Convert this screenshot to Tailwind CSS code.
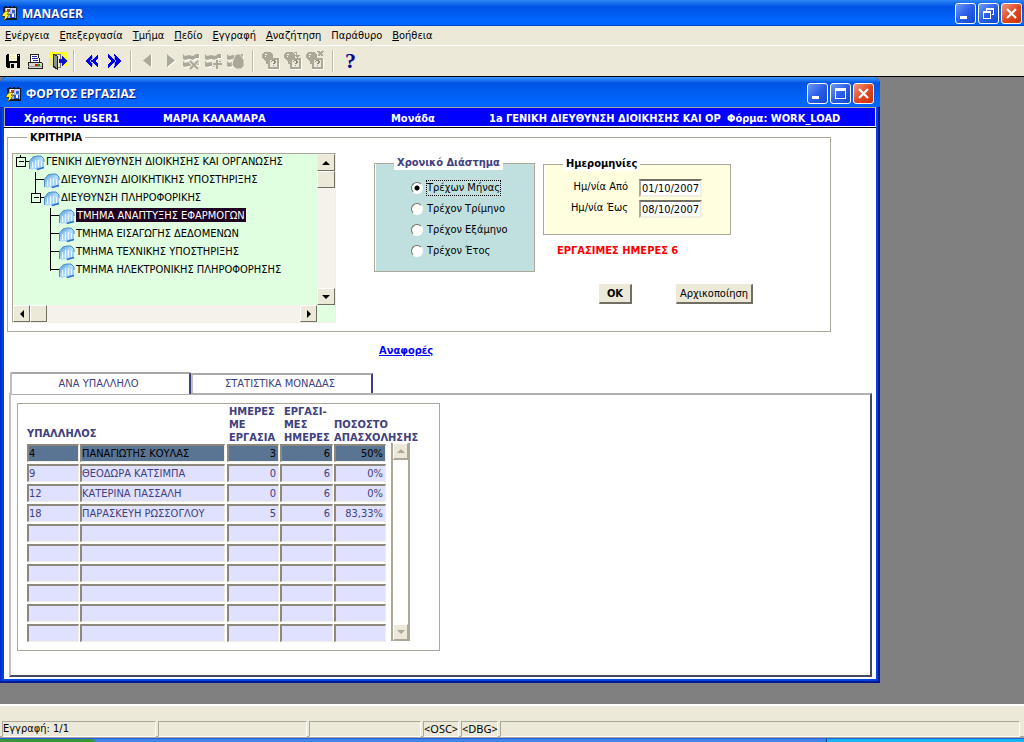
<!DOCTYPE html>
<html lang="el">
<head>
<meta charset="utf-8">
<title>MANAGER</title>
<script src="https://cdn.jsdelivr.net/npm/@tailwindcss/browser@4"></script>
</head>
<body class="flex min-h-screen flex-col bg-[#808080] font-['DejaVu_Sans_Condensed','DejaVu_Sans',sans-serif] text-[11px] leading-[14px] text-black">

<svg class="absolute size-0" aria-hidden="true">
  <defs>
    <linearGradient id="cube" x1="0" y1="0" x2="1" y2="1"><stop offset="0" stop-color="#4a9be0"/><stop offset=".5" stop-color="#b4dcff"/><stop offset="1" stop-color="#8cc4f8"/></linearGradient>
    <symbol id="book" viewBox="0 0 16 16">
      <path d="M1 14V6l3-4 4-1h5l2 3v9l-7 2-3-1-2 1z" fill="url(#cube)"/>
      <path d="M.5 14V6L4 2l4-1h4l3 3v3" fill="none" stroke="#4c8cc0"/>
      <path d="M3.500 13V7M6.500 13V5M9.500 12V5M12.500 12V6" stroke="#eaf7ff"/>
      <path d="M8 14.500l7-2" stroke="#2a70c8" stroke-width="1.500"/>
    </symbol>
    <symbol id="app" viewBox="0 0 16 16">
      <path d="M1 2h2V1h2v1h2V1h2v1h2V1h2v1h2v13H3v-3H1z" fill="#101820"/>
      <path d="M3 3h11v10H5V9H3z" fill="#9fb4e8"/>
      <path d="M4 3h4v5H4z" fill="#fff"/><path d="M5 4h3v3H5z" fill="#c83040"/>
      <path d="M9 3h5v5H9z" fill="#c4d4fc"/><path d="M10 5h3v3h-3z" fill="#4060c8"/>
      <path d="M8 9h5v4H8z" fill="#2850d8"/><path d="M10 9h2v3h-2z" fill="#fff"/>
      <path d="M3 6h4L5 9h3l-6 7 1-5H0z" fill="#ffee20" stroke="#504800" stroke-width=".6"/>
    </symbol>
    <symbol id="sheets" viewBox="0 0 18 18">
      <path d="M1 2l2 2 4-1 4 1 3-2h3v4h-3l-3 2-4-1-4 1-2-1zM1 9l2 2 4-1 4 1 3-2h3v4h-3l-3 2-4-1-4 1-2-1z"/>
    </symbol>
    <symbol id="query" viewBox="0 0 20 20">
      <path d="M1 3l2-2h6l3 2v4l-2 1-1 5H5v-2L1 7z" fill="#aca899"/>
      <path d="M4 3h2M4 5h1" stroke="#fff"/>
      <path d="M7 7h11v11H7z" fill="#aca899"/><path d="M9 9h7v7H9z" fill="#ece9d8"/>
      <path d="M10 10h1V9h3v1h1v2h-1v1h-2v-1h1v-2h-2v1h-1zM12 14h1v1h-1z" fill="#8c8878"/>
      <path d="M7 18h11V8h1v11H7z" fill="#fff"/>
    </symbol>
  </defs>
</svg>

<!-- Application title bar -->
<header class="flex h-[26px] items-center bg-linear-to-b from-[#2f86f5] from-0% via-[#0054e3] via-25% to-[#0066ff] to-80% pl-[2px] pr-[2px] shadow-[inset_0_-1px_0_#0048c8]">
  <svg class="size-4" shape-rendering="crispEdges"><use href="#app"/></svg>
  <h1 class="ml-1 flex-1 pt-[2px] font-['Open_Sans','Noto_Sans',sans-serif] text-[12px] font-bold text-white [text-shadow:1px_1px_0_#0a1883]">MANAGER</h1>
  <div class="flex gap-[2px]">
    <button aria-label="Minimize" class="size-[21px] rounded-[3px] border border-white bg-linear-to-br from-[#6f98f5] via-[#2a5ee8] to-[#1148d0]"><svg class="size-full" viewBox="0 0 19 19"><path d="M4 12h7v3H4z" fill="#fff"/></svg></button>
    <button aria-label="Restore" class="size-[21px] rounded-[3px] border border-white bg-linear-to-br from-[#6f98f5] via-[#2a5ee8] to-[#1148d0]"><svg class="size-full" viewBox="0 0 19 19" shape-rendering="crispEdges"><path d="M7 4h8v7h-2v-1h1V6H8v1H7zM4 7h8v8H4zM5 9v5h6V9z" fill="#fff" fill-rule="evenodd"/></svg></button>
    <button aria-label="Close" class="size-[21px] rounded-[3px] border border-white bg-linear-to-br from-[#f0937a] via-[#e04a22] to-[#c83208]"><svg class="size-full" viewBox="0 0 19 19"><path d="M5 5l9 9M14 5l-9 9" stroke="#fff" stroke-width="2.200"/></svg></button>
  </div>
</header>

<!-- Menu -->
<nav class="flex h-5 items-center gap-[10px] border-b border-white bg-[#ece9d8] pl-[5px]">
  <a href="#"><u>Ε</u>νέργεια</a>
  <a href="#"><u>Ε</u>πεξεργασία</a>
  <a href="#"><u>Τ</u>μήμα</a>
  <a href="#"><u>Π</u>εδίο</a>
  <a href="#"><u>Ε</u>γγραφή</a>
  <a href="#"><u>Α</u>ναζήτηση</a>
  <a href="#">Παράθυρο</a>
  <a href="#"><u>Β</u>οήθεια</a>
</nav>

<!-- Toolbar -->
<div role="toolbar" class="flex h-[31px] items-center border-b border-black bg-[#ece9d8] pl-[5px]">
  <button aria-label="Save" class="w-[22px]"><svg width="16" height="16" shape-rendering="crispEdges"><path d="M2 1h12l1 1v13H2l-1-1V2z"/><path d="M4 1h8v7H4z" fill="#fffbd8"/><path d="M5 3h1v1H5zM8 3h1v1H8zM6 5h1v1H6zM9 5h1v1H9z" fill="#e8d860"/><path d="M5 10h7v5H5z" fill="#e8e8e0"/><path d="M6 11h3v4H6z"/><path d="M13 2h1v1h-1z" fill="#fff"/></svg></button>
  <button aria-label="Print" class="w-[22px]"><svg width="16" height="16" shape-rendering="crispEdges"><path d="M3 1h8l2 8H4z" fill="#fff" stroke="#222"/><path d="M5 3h5M5 5h6M6 7h5" stroke="#2a2ab0"/><path d="M1 9h13l1 1v5H1z" fill="#d8d8d0" stroke="#222"/><path d="M8 11h2v2H8z" fill="#f00"/><path d="M10 11h3v2h-3z" fill="#0a0"/><path d="M1 13h14v1H1z" fill="#999"/></svg></button>
  <button aria-label="Exit"><svg width="18" height="18" shape-rendering="crispEdges"><path d="M0 0h18v14H0z" fill="#ffff20"/><path d="M0 6h4v8H0zM8 2h6v12H8z" fill="#e8e890"/><path d="M4 2h7v13H4z" fill="#ece9d8" stroke="#777"/><path d="M4 2l4 2v13l-4-3z" fill="#889090" stroke="#222"/><path d="M10 7h3V4l5 5-5 5v-3h-3z" fill="#1010d0"/></svg></button>
  <span class="ml-[6px] mr-[10px] h-[22px] border-l border-r border-l-[#c0bcac] border-r-white"></span>
  <button aria-label="Previous block" class="w-[23px]"><svg width="14" height="14" shape-rendering="crispEdges"><path d="M7 0v14L0 7zM13 0v4l-3 3 3 3v4L6 7z" fill="#0000e0"/><path d="M7 2v3L5 7l2 2v3" fill="none" stroke="#9ab0ff"/></svg></button>
  <button aria-label="Next block"><svg width="14" height="14" shape-rendering="crispEdges"><path d="M6 0v14l7-7zM0 0v4l3 3-3 3v4l7-7z" fill="#0000e0"/><path d="M6 2v3l2 2-2 2v3" fill="none" stroke="#9ab0ff"/></svg></button>
  <span class="ml-[8px] mr-[11px] h-[22px] border-l border-r border-l-[#c0bcac] border-r-white"></span>
  <button aria-label="Previous record" disabled class="w-[23px]"><svg width="10" height="14"><path d="M9 0v14L2 7z" fill="#fff"/><path d="M8 0v13L0 6.500z" fill="#aca899"/></svg></button>
  <button aria-label="Next record" disabled class="w-[16px]"><svg width="10" height="14"><path d="M2 0v14l8-7z" fill="#fff"/><path d="M1 0v13l8-6.500z" fill="#aca899"/></svg></button>
  <button aria-label="Delete record" disabled class="w-[22px]"><svg width="19" height="19"><use href="#sheets" x="1" y="1" fill="#fff" width="18" height="18"/><use href="#sheets" fill="#aca899" width="18" height="18"/><path d="M8 9l8 8M16 9l-8 8" stroke="#ece9d8" stroke-width="4"/><path d="M8 9l8 8M16 9l-8 8" stroke="#aca899" stroke-width="2"/></svg></button>
  <button aria-label="Insert record" disabled class="w-[22px]"><svg width="19" height="19"><use href="#sheets" x="1" y="1" fill="#fff" width="18" height="18"/><use href="#sheets" fill="#aca899" width="18" height="18"/><path d="M13 7v11M8 12h11" stroke="#ece9d8" stroke-width="4"/><path d="M13 8v9M9 12h9" stroke="#aca899" stroke-width="2"/></svg></button>
  <button aria-label="Lock record" disabled><svg width="19" height="19"><use href="#sheets" x="1" y="1" fill="#fff" width="18" height="18"/><use href="#sheets" fill="#aca899" width="18" height="18"/><path d="M7 8l3-6h4l4 6v6l-3 3h-5l-4-4z" fill="#aca899" stroke="#ece9d8"/></svg></button>
  <span class="ml-[7px] mr-[7px] h-[22px] border-l border-r border-l-[#c0bcac] border-r-white"></span>
  <button aria-label="Enter query" disabled class="w-[22px]"><svg width="20" height="20" shape-rendering="crispEdges"><use href="#query"/></svg></button>
  <button aria-label="Execute query" disabled class="w-[22px]"><svg width="20" height="20" shape-rendering="crispEdges"><use href="#query"/><path d="M11 1h3v3h3l-3 3-3-3h2V2h-2z" fill="#aca899"/></svg></button>
  <button aria-label="Cancel query" disabled class="w-[22px]"><svg width="20" height="20" shape-rendering="crispEdges"><use href="#query"/><path d="M13 0l5 5M18 0l-5 5" stroke="#aca899" stroke-width="1.500"/></svg></button>
  <span class="ml-[5px] mr-[11px] h-[22px] border-l border-r border-l-[#c0bcac] border-r-white"></span>
  <button aria-label="Help" class="font-['Liberation_Serif',serif] text-[22px] font-bold leading-5 text-[#000090]">?</button>
</div>

<main class="flex-1">
  <!-- Workload window -->
  <section class="mr-36 rounded-t-[7px] bg-[#0044e0] px-1 pb-1 shadow-[inset_-2px_-2px_0_#001a98,inset_2px_0_0_#0030d0]">
    <header class="-mx-1 flex h-[30px] items-center rounded-t-[7px] bg-linear-to-b from-[#3f98ff] from-0% via-[#0054e3] via-20% to-[#0066ff] to-85% pl-[6px] pr-[6px] pt-[3px]">
      <svg class="size-4" shape-rendering="crispEdges"><use href="#app"/></svg>
      <h2 class="ml-1 flex-1 font-['Open_Sans','Noto_Sans',sans-serif] text-[12px] font-bold text-white [text-shadow:1px_1px_0_#0a1883]">ΦΟΡΤΟΣ ΕΡΓΑΣΙΑΣ</h2>
      <div class="flex gap-[2px]">
        <button aria-label="Minimize" class="size-[21px] rounded-[3px] border border-white bg-linear-to-br from-[#6f98f5] via-[#2a5ee8] to-[#1148d0]"><svg class="size-full" viewBox="0 0 19 19"><path d="M4 12h7v3H4z" fill="#fff"/></svg></button>
        <button aria-label="Maximize" class="size-[21px] rounded-[3px] border border-white bg-linear-to-br from-[#6f98f5] via-[#2a5ee8] to-[#1148d0]"><svg class="size-full" viewBox="0 0 19 19" shape-rendering="crispEdges"><path d="M4 4h11v11H4zM5 7v7h9V7z" fill="#fff" fill-rule="evenodd"/></svg></button>
        <button aria-label="Close" class="size-[21px] rounded-[3px] border border-white bg-linear-to-br from-[#f0937a] via-[#e04a22] to-[#c83208]"><svg class="size-full" viewBox="0 0 19 19"><path d="M5 5l9 9M14 5l-9 9" stroke="#fff" stroke-width="2.200"/></svg></button>
      </div>
    </header>

    <div class="grid h-5 grid-cols-[59px_80px_228px_98px_238px_1fr] items-center whitespace-nowrap border border-b-white border-l-[#aca899] border-r-[#ece9d8] border-t-[#aca899] bg-[#0000ff] pl-[19px] pt-1 font-bold text-white">
      <span>Χρήστης:</span><span>USER1</span><span>ΜΑΡΙΑ ΚΑΛΑΜΑΡΑ</span>
      <span>Μονάδα</span>
      <span>1a ΓΕΝΙΚΗ ΔΙΕΥΘΥΝΣΗ ΔΙΟΙΚΗΣΗΣ ΚΑΙ ΟΡ</span><span>Φόρμα: WORK_LOAD</span>
    </div>

    <div class="border-t border-black bg-white px-[3px] pb-[2px] pt-[2px]">
      <fieldset class="mr-[42px] border border-[#aca899] pb-2 pl-1">
        <legend class="ml-[15px] h-[14px] px-[3px] font-bold leading-4">ΚΡΙΤΗΡΙΑ</legend>
        <div class="flex items-start pt-[9px]">

          <!-- Organisation tree -->
          <div class="grid w-[324px] grid-cols-[1fr_18px] grid-rows-[151px_17px] border border-[#f1efe2] border-l-[#aca899] border-t-[#aca899] bg-[#e0ffe0]">
            <ul id="tree" class="overflow-hidden whitespace-nowrap"></ul>
            <div class="flex flex-col bg-[#f4f2ea]">
              <button aria-label="Up" class="grid h-[17px] place-items-center border border-b-[#716f64] border-l-[#f1efe2] border-r-[#716f64] border-t-[#f1efe2] bg-[#ece9d8]"><svg width="8" height="4"><path d="M4 0l4 4H0z"/></svg></button>
              <span class="h-[17px] border border-b-[#716f64] border-l-white border-r-[#716f64] border-t-white bg-[#ece9d8]"></span>
              <button aria-label="Down" class="mt-auto grid h-[17px] place-items-center border border-b-[#716f64] border-l-white border-r-[#716f64] border-t-white bg-[#ece9d8]"><svg width="8" height="4"><path d="M4 4l4-4H0z"/></svg></button>
            </div>
            <div class="flex bg-[#f4f2ea]">
              <button aria-label="Left" class="grid w-[17px] place-items-center border border-b-[#716f64] border-l-white border-r-[#716f64] border-t-white bg-[#ece9d8]"><svg width="4" height="8"><path d="M0 4l4-4v8z"/></svg></button>
              <span class="w-[17px] border border-b-[#716f64] border-l-white border-r-[#716f64] border-t-white bg-[#ece9d8]"></span>
              <button aria-label="Right" class="ml-auto grid w-[17px] place-items-center border border-b-[#716f64] border-l-white border-r-[#716f64] border-t-white bg-[#ece9d8]"><svg width="4" height="8"><path d="M4 4L0 0v8z"/></svg></button>
            </div>
          </div>

          <!-- Period -->
          <fieldset class="ml-[38px] mt-[3px] h-[116px] w-[161px] border border-[#aca899] bg-[#c0e0e0] pl-9 shadow-[inset_1px_0_0_#fff]">
            <legend class="-ml-[17px] bg-white px-[3px] font-bold text-[#404080]">Χρονικό Διάστημα</legend>
            <div class="flex flex-col pt-[7px]">
              <label class="flex h-[21px] items-center gap-1"><input type="radio" name="period" checked class="size-3 appearance-none rounded-full border border-b-white border-l-[#716f64] border-r-white border-t-[#716f64] bg-white checked:bg-[radial-gradient(#000_0_2px,#fff_3px)]"><span class="outline-dotted outline-1 outline-black">Τρέχων Μήνας</span></label>
              <label class="flex h-[21px] items-center gap-1"><input type="radio" name="period" class="size-3 appearance-none rounded-full border border-b-white border-l-[#716f64] border-r-white border-t-[#716f64] bg-white checked:bg-[radial-gradient(#000_0_2px,#fff_3px)]"><span>Τρέχον Τρίμηνο</span></label>
              <label class="flex h-[21px] items-center gap-1"><input type="radio" name="period" class="size-3 appearance-none rounded-full border border-b-white border-l-[#716f64] border-r-white border-t-[#716f64] bg-white checked:bg-[radial-gradient(#000_0_2px,#fff_3px)]"><span>Τρέχον Εξάμηνο</span></label>
              <label class="flex h-[21px] items-center gap-1"><input type="radio" name="period" class="size-3 appearance-none rounded-full border border-b-white border-l-[#716f64] border-r-white border-t-[#716f64] bg-white checked:bg-[radial-gradient(#000_0_2px,#fff_3px)]"><span>Τρέχον Έτος</span></label>
            </div>
          </fieldset>

          <!-- Dates -->
          <div class="ml-2 mt-1">
            <fieldset class="h-[78px] w-[188px] border border-[#aca899] bg-[#ffffe0] shadow-[inset_1px_0_0_#fff]">
              <legend class="ml-[19px] bg-white px-[3px] font-bold">Ημερομηνίες</legend>
              <div class="grid grid-cols-[84px_63px] gap-x-[11px] gap-y-[3px] pt-[8px] text-right">
                <label for="from" class="leading-[15px]">Ημ/νία Από</label>
                <input id="from" value="01/10/2007" class="h-[18px] border-2 border-b-[#f1efe2] border-l-[#aca899] border-r-[#f1efe2] border-t-[#716f64] bg-white pl-[1px]">
                <label for="to" class="leading-[15px]">Ημ/νία Έως</label>
                <input id="to" value="08/10/2007" class="h-[18px] border-2 border-b-[#f1efe2] border-l-[#aca899] border-r-[#f1efe2] border-t-[#716f64] bg-white pl-[1px]">
              </div>
            </fieldset>
            <p class="ml-[14px] mt-[9px] font-bold text-[#ff0000]">ΕΡΓΑΣΙΜΕΣ ΗΜΕΡΕΣ 6</p>
            <div class="ml-14 mt-[26px] flex gap-11">
              <button class="h-5 w-[33px] border border-b-2 border-r-2 border-[#716f64] border-l-[#ece9d8] border-t-[#ece9d8] bg-[#ece9d8] font-bold">OK</button>
              <button class="h-5 w-[77px] border border-b-2 border-r-2 border-[#716f64] border-l-[#ece9d8] border-t-[#ece9d8] bg-[#ece9d8]">Αρχικοποίηση</button>
            </div>
          </div>
        </div>
      </fieldset>

      <a href="#" class="ml-[372px] mt-[12px] inline-block font-bold text-[#0000ff] underline">Αναφορές</a>

      <!-- Tabs -->
      <div role="tablist" class="ml-[3px] mt-[14px] flex items-end text-[#404080]">
        <button role="tab" aria-selected="true" class="z-1 -mb-px h-[22px] w-[181px] rounded-t-[2px] border-2 border-b-0 border-l-[#c0c0c0] border-r-[#404080] border-t-[#a8a8a8] bg-white pr-1">ΑΝΑ ΥΠΑΛΛΗΛΟ</button>
        <button role="tab" aria-selected="false" class="h-[20px] w-[182px] border-2 border-b-0 border-l-[#c0c0c0] border-r-[#404080] border-t-[#a8a8a8] bg-white pr-1">ΣΤΑΤΙΣΤΙΚΑ ΜΟΝΑΔΑΣ</button>
      </div>
      <div role="tabpanel" class="ml-[2px] mr-px border-2 border-b-[#484860] border-l-[#c0c0c0] border-r-[#484860] border-t-[#b0b0b0] pb-6 pl-[6px] pt-2">
        <div class="flex w-[423px] items-start border border-[#aca899] pb-[6px] pl-2 text-[#404080]">
          <table class="mt-px w-[361px] table-fixed border-separate border-spacing-x-[1px] border-spacing-y-0">
            <colgroup><col class="w-[52px]"><col class="w-[146px]"><col class="w-[52px]"><col class="w-[53px]"><col class="w-[52px]"></colgroup>
            <thead>
              <tr class="whitespace-nowrap text-left align-bottom font-bold leading-[13px]">
                <th colspan="2" class="p-0 pb-1">ΥΠΑΛΛΗΛΟΣ</th>
                <th class="p-0 pl-[2px]">ΗΜΕΡΕΣ<br>ΜΕ<br>ΕΡΓΑΣΙΑ</th>
                <th class="p-0 pl-[4px]">ΕΡΓΑΣΙ-<br>ΜΕΣ<br>ΗΜΕΡΕΣ</th>
                <th class="p-0">ΠΟΣΟΣΤΟ<br>ΑΠΑΣΧΟΛΗΣΗΣ</th>
              </tr>
            </thead>
            <tbody id="rows"></tbody>
          </table>
          <div class="ml-[4px] mt-[39px] flex h-[198px] w-[19px] flex-col border-x-2 border-l-[#aca899] border-r-[#aca899] bg-white">
            <button aria-label="Scroll up" class="grid h-[17px] place-items-center border border-b-2 border-[#aca899] border-l-white border-t-white bg-[#ece9d8]"><svg width="8" height="4"><path d="M4 0l4 4H0z" fill="#aca899"/></svg></button>
            <button aria-label="Scroll down" class="mt-auto grid h-[17px] place-items-center border border-b-2 border-[#aca899] border-l-white border-t-white bg-[#ece9d8]"><svg width="8" height="4"><path d="M4 4l4-4H0z" fill="#aca899"/></svg></button>
          </div>
        </div>
      </div>
    </div>
  </section>
</main>

<!-- Status bar -->
<footer class="border-t-2 border-white bg-[#ece9d8] pt-[15px]">
  <div class="grid h-[17px] grid-cols-[154px_149px_112px_36px_37px_1fr] gap-x-[2px] border-b-2 border-[#aca899] pl-[2px] pr-1">
    <span class="border border-b-white border-l-[#aca899] border-r-white border-t-[#aca899]">Εγγραφή: 1/1</span>
    <span class="border border-b-white border-l-[#aca899] border-r-white border-t-[#aca899]"></span>
    <span class="border border-b-white border-l-[#aca899] border-r-white border-t-[#aca899]"></span>
    <span class="border border-b-white border-l-[#aca899] border-r-white border-t-[#aca899] font-['Noto_Sans',sans-serif]">&lt;OSC&gt;</span>
    <span class="border border-b-white border-l-[#aca899] border-r-white border-t-[#aca899] font-['Noto_Sans',sans-serif]">&lt;DBG&gt;</span>
    <span class="border border-b-white border-l-[#aca899] border-r-white border-t-[#aca899]"></span>
  </div>
  <div class="flex h-1 border-t border-[#245edb] bg-[#3f86ec]">
    <span class="w-[95px] rounded-tr-[4px] bg-[#3c943c]"></span>
    <span class="ml-auto w-[198px] border-l border-[#0a3a80] bg-[#18b4f0]"></span>
  </div>
</footer>

<script>
const nodes = [
  [0, 'ΓΕΝΙΚΗ ΔΙΕΥΘΥΝΣΗ ΔΙΟΙΚΗΣΗΣ ΚΑΙ ΟΡΓΑΝΩΣΗΣ', 'M7 0v3M3 3h9v9H3zM5 7h5M12 7h4'],
  [1, 'ΔΙΕΥΘΥΝΣΗ ΔΙΟΙΚΗΤΙΚΗΣ ΥΠΟΣΤΗΡΙΞΗΣ', 'M22 -1v20M22 7h9'],
  [1, 'ΔΙΕΥΘΥΝΣΗ ΠΛΗΡΟΦΟΡΙΚΗΣ', 'M22 -1v4M18 3h9v9h-9zM20 7h5M27 7h4'],
  [2, 'ΤΜΗΜΑ ΑΝΑΠΤΥΞΗΣ ΕΦΑΡΜΟΓΩΝ', 'M37 -1v20M37 7h9'],
  [2, 'ΤΜΗΜΑ ΕΙΣΑΓΩΓΗΣ ΔΕΔΟΜΕΝΩΝ', 'M37 -1v20M37 7h9'],
  [2, 'ΤΜΗΜΑ ΤΕΧΝΙΚΗΣ ΥΠΟΣΤΗΡΙΞΗΣ', 'M37 -1v20M37 7h9'],
  [2, 'ΤΜΗΜΑ ΗΛΕΚΤΡΟΝΙΚΗΣ ΠΛΗΡΟΦΟΡΗΣΗΣ', 'M37 -1v9M37 7h9'],
];
document.getElementById('tree').innerHTML = nodes.map(([level, name, lines], i) => `
  <li class="flex h-[18px]">
    <svg width="${16 + 15 * level}" height="18" class="shrink-0" shape-rendering="crispEdges"><path d="${lines}" transform="translate(.5 .5)" fill="none" stroke="#000"/></svg>
    <svg width="16" height="18" class="shrink-0"><use href="#book" y="1" width="16" height="16"/></svg>
    <span class="${i === 3 ? 'ml-px h-[14px] bg-[#200020] px-px text-white' : 'px-px'} leading-4">${name}</span>
  </li>`).join('');

const staff = [
  ['4', 'ΠΑΝΑΓΙΩΤΗΣ ΚΟΥΛΑΣ', '3', '6', '50%'],
  ['9', 'ΘΕΟΔΩΡΑ ΚΑΤΣΙΜΠΑ', '0', '6', '0%'],
  ['12', 'ΚΑΤΕΡΙΝΑ ΠΑΣΣΑΛΗ', '0', '6', '0%'],
  ['18', 'ΠΑΡΑΣΚΕΥΗ ΡΩΣΣΟΓΛΟΥ', '5', '6', '83,33%'],
  ...Array.from({ length: 6 }, () => ['', '', '', '', '']),
];
const heads = ['Κωδικός', 'Υπάλληλος', 'Ημέρες με εργασία', 'Εργάσιμες ημέρες', 'Ποσοστό απασχόλησης'];
document.getElementById('rows').innerHTML = staff.map((row, r) => `<tr>${row.map((v, c) => `
  <td class="p-0 pb-[2px]"><input aria-label="${heads[c]}" value="${v}" class="${r === 0 ? 'bg-[#5a7494] text-black' : 'bg-[#e0e0ff]'} ${c > 1 ? 'text-right' : ''} ${c === 1 ? 'mr-px w-[145px]' : 'w-full'} block h-[18px] border-2 border-b border-r border-b-[#f1efe2] border-l-[#8c897c] border-r-[#f1efe2] border-t-[#8c897c] pr-[2px]"></td>`).join('')}</tr>`).join('');
</script>
</body>
</html>
